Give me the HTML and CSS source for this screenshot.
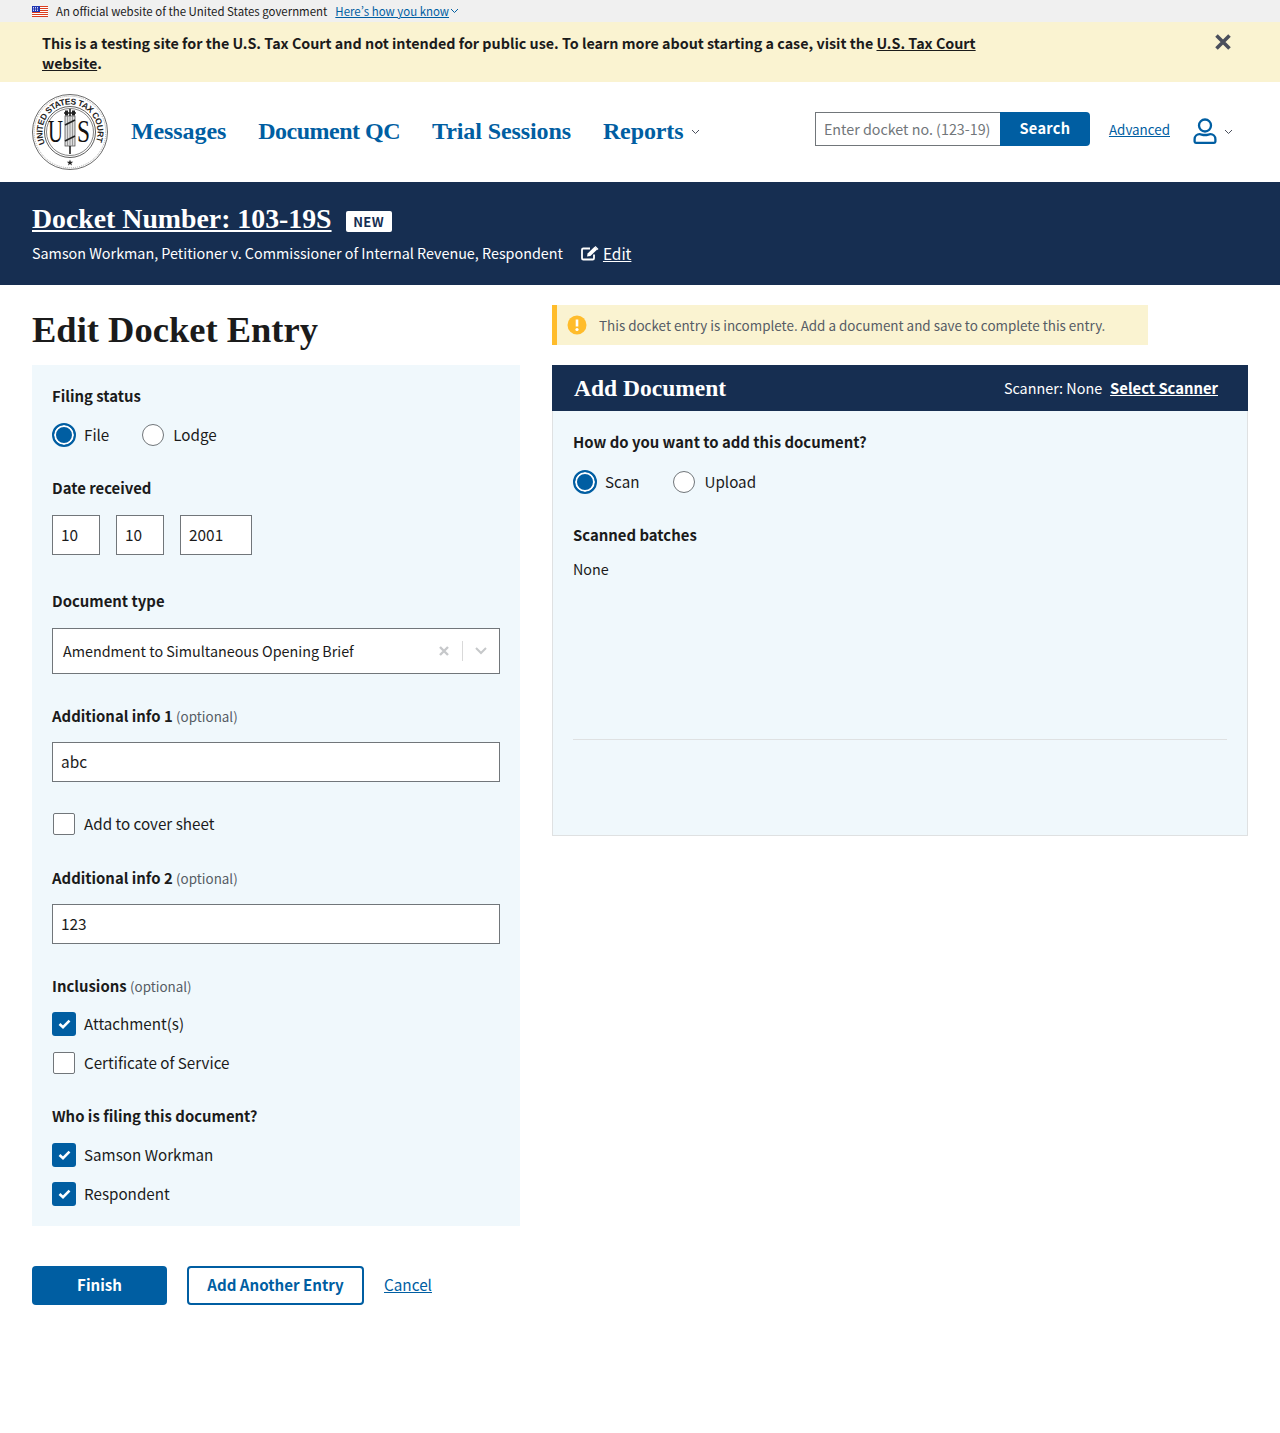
FILE: index.html
```html
<!DOCTYPE html>
<html lang="en">
<head>
<meta charset="utf-8">
<title>Edit Docket Entry</title>
<link rel="stylesheet" href="styles.css">
</head>
<body>
<div class="gov-banner">
  <svg class="flag" width="16" height="11" viewBox="0 0 16 11">
    <rect width="16" height="11" fill="#fff"/>
    <path d="M0 .5h16M0 2.5h16M0 4.5h16M0 6.5h16M0 8.5h16M0 10.5h16" stroke="#db3e1f" stroke-width="1"/>
    <rect width="8" height="6" fill="#1e33b1"/>
    <path d="M1 1.5h6M1 3h6M1 4.5h6" stroke="#fff" stroke-width=".8" stroke-dasharray="1 1"/>
  </svg>
  <span class="gov-text">An official website of the United States government</span>
  <a class="gov-link" href="#">Here’s how you know</a>
  <svg class="gov-chev" width="9" height="6" viewBox="0 0 9 6"><path d="M1 1l3.5 3.500L8 1" fill="none" stroke="#005ea2" stroke-width="1"/></svg>
</div>

<div class="test-banner">
  <p class="test-text">This is a testing site for the U.S. Tax Court and not intended for public use. To learn more about starting a case, visit the <a href="#">U.S. Tax Court website</a>.</p>
  <svg class="test-close" width="16" height="16" viewBox="0 0 16 16"><path d="M1.500 1.500l13 13M14.500 1.500l-13 13" stroke="#4a4f5c" stroke-width="3.6"/></svg>
</div>

<header class="site-header">
  <svg class="seal" width="76" height="76" viewBox="0 0 76 76">
    <defs><path id="sealArc" d="M13.100 49.600A27.500 27.500 0 1 1 62.900 49.600"/></defs>
    <circle cx="38" cy="38" r="37.500" fill="#fff" stroke="#444" stroke-width=".8"/>
    <circle cx="38" cy="38" r="35.800" fill="none" stroke="#999" stroke-width=".8" stroke-dasharray="1 1"/>
    <circle cx="38" cy="38" r="25.500" fill="none" stroke="#333" stroke-width=".8"/>
    <circle cx="38" cy="38" r="23.500" fill="none" stroke="#333" stroke-width=".6"/>
    <text class="seal-ring" fill="#222"><textPath href="#sealArc" textLength="108">UNITED STATES TAX COURT</textPath></text>
    <rect x="33" y="22" width="10" height="30" fill="#ddd" stroke="#444" stroke-width=".7"/>
    <path d="M35.500 22v30M38 22v30M40.500 22v30" stroke="#888" stroke-width=".8"/>
    <path d="M32 19h12M38 15v7M33 31l10-5M33 47l10-5M38 52v8" stroke="#222" stroke-width="1.600" fill="none"/>
    <path d="M33 16.500h3v5h-3zM40 16.500h3v5h-3z" fill="#222"/>
    <text class="seal-letter" x="16" y="48" fill="#111" textLength="15" lengthAdjust="spacingAndGlyphs">U</text>
    <text class="seal-letter" x="45" y="48" fill="#111" textLength="13" lengthAdjust="spacingAndGlyphs">S</text>
    <path d="M38 65.500l.8 2.300h2.400l-1.900 1.400.7 2.300-2-1.400-2 1.400.7-2.300-1.900-1.400h2.400z" fill="#222"/>
  </svg>
  <nav class="main-nav">
    <a href="#">Messages</a>
    <a href="#" class="nav-tight">Document QC</a>
    <a href="#">Trial Sessions</a>
    <a href="#" class="nav-reports">Reports</a>
    <svg class="nav-chev" width="9" height="6" viewBox="0 0 9 6"><path d="M1 1l3.500 3.500L8 1" fill="none" stroke="#4a4f5c" stroke-width="1"/></svg>
  </nav>
  <form class="search">
    <input class="search-input" type="text" placeholder="Enter docket no. (123-19)">
    <button class="search-btn" type="button">Search</button>
  </form>
  <a class="advanced" href="#">Advanced</a>
  <svg class="user-icon" width="24" height="26" viewBox="0 0 24 26">
    <circle cx="12" cy="7.500" r="6" fill="none" stroke="#005ea2" stroke-width="2.300"/>
    <path d="M1.600 23.500v-2.300c0-3 2.400-5 5-5 1.500 0 2.800.8 5.400.8s3.900-.8 5.400-.8c2.600 0 5 2 5 5v2.300c0 .8-.6 1.300-1.300 1.300H2.900c-.7 0-1.300-.5-1.300-1.300z" fill="none" stroke="#005ea2" stroke-width="2.300"/>
  </svg>
  <svg class="user-chev" width="9" height="6" viewBox="0 0 9 6"><path d="M1 1l3.500 3.500L8 1" fill="none" stroke="#4a4f5c" stroke-width="1"/></svg>
</header>

<section class="docket-bar">
  <div class="docket-top">
    <a class="docket-number" href="#">Docket Number: 103-19S</a>
    <span class="badge">NEW</span>
  </div>
  <div class="docket-sub">
    <span>Samson Workman, Petitioner v. Commissioner of Internal Revenue, Respondent</span>
    <svg class="edit-icon" width="18" height="15" viewBox="0 0 18 15">
      <path d="M13 8.500v3.700c0 .8-.6 1.300-1.300 1.300H2.300c-.7 0-1.300-.5-1.300-1.300V3.800c0-.7.6-1.300 1.300-1.300H9" fill="none" stroke="#fff" stroke-width="1.800"/>
      <path d="M6 10.500l.6-3L13.500.8l2.700 2.700-6.800 6.500z" fill="#fff"/>
      <path d="M14.500 0l3 2.900-1 1-2.900-3z" fill="#fff"/>
    </svg>
    <a class="docket-edit" href="#">Edit</a>
  </div>
</section>

<main class="content">
  <div class="left-col">
    <h1 class="page-title">Edit Docket Entry</h1>
    <div class="card">
      <div class="label">Filing status</div>
      <div class="choice-row first-row">
        <span class="radio checked"></span><span class="choice">File</span>
        <span class="radio second"></span><span class="choice">Lodge</span>
      </div>
      <div class="label after-choice">Date received</div>
      <div class="date-row">
        <input class="input date-short" type="text" value="10">
        <input class="input date-short" type="text" value="10">
        <input class="input date-year" type="text" value="2001">
      </div>
      <div class="label after-date">Document type</div>
      <div class="select">
        <span class="select-value">Amendment to Simultaneous Opening Brief</span>
        <svg class="select-x" width="10" height="10" viewBox="0 0 10 10"><path d="M1 1l8 8M9 1L1 9" stroke="#c6c8ca" stroke-width="2.400"/></svg>
        <span class="select-sep"></span>
        <svg class="select-chev" width="12" height="8" viewBox="0 0 12 8"><path d="M1 1l5 5 5-5" fill="none" stroke="#c6c8ca" stroke-width="2"/></svg>
      </div>
      <div class="label after-field">Additional info 1 <span class="optional">(optional)</span></div>
      <input class="input wide" type="text" value="abc">
      <label class="check-row cover"><span class="checkbox"></span><span class="choice">Add to cover sheet</span></label>
      <div class="label after-field">Additional info 2 <span class="optional">(optional)</span></div>
      <input class="input wide" type="text" value="123">
      <div class="label after-field">Inclusions <span class="optional">(optional)</span></div>
      <label class="check-row"><span class="checkbox on"><svg width="13" height="10" viewBox="0 0 13 10"><path d="M1.500 5l3.500 3.200 6.500-6.500" fill="none" stroke="#fff" stroke-width="2.600"/></svg></span><span class="choice">Attachment(s)</span></label>
      <label class="check-row next"><span class="checkbox"></span><span class="choice">Certificate of Service</span></label>
      <div class="label after-choice">Who is filing this document?</div>
      <label class="check-row next"><span class="checkbox on"><svg width="13" height="10" viewBox="0 0 13 10"><path d="M1.500 5l3.500 3.200 6.500-6.500" fill="none" stroke="#fff" stroke-width="2.600"/></svg></span><span class="choice">Samson Workman</span></label>
      <label class="check-row next"><span class="checkbox on"><svg width="13" height="10" viewBox="0 0 13 10"><path d="M1.500 5l3.500 3.200 6.500-6.500" fill="none" stroke="#fff" stroke-width="2.600"/></svg></span><span class="choice">Respondent</span></label>
    </div>
    <div class="actions">
      <button class="btn btn-primary" type="button">Finish</button>
      <button class="btn btn-outline" type="button">Add Another Entry</button>
      <a class="cancel" href="#">Cancel</a>
    </div>
  </div>

  <div class="right-col">
    <div class="alert">
      <svg class="alert-icon" width="20" height="20" viewBox="0 0 20 20">
        <circle cx="10" cy="10" r="9.500" fill="#ffbc2b"/>
        <path d="M10 4.500v7" stroke="#fff" stroke-width="2.600"/>
        <circle cx="10" cy="14.500" r="1.600" fill="#fff"/>
      </svg>
      <span>This docket entry is incomplete. Add a document and save to complete this entry.</span>
    </div>
    <div class="doc-head">
      <h2 class="doc-title">Add Document</h2>
      <span class="scanner">Scanner: None</span>
      <a class="select-scanner" href="#">Select Scanner</a>
    </div>
    <div class="doc-body">
      <div class="label">How do you want to add this document?</div>
      <div class="choice-row">
        <span class="radio checked"></span><span class="choice">Scan</span>
        <span class="radio second"></span><span class="choice">Upload</span>
      </div>
      <div class="label after-choice">Scanned batches</div>
      <p class="none-text">None</p>
      <hr class="rule">
    </div>
  </div>
</main>
</body>
</html>
```
FILE: styles.css
```css
* { box-sizing: border-box; }
html, body { margin: 0; padding: 0; }
body {
  font-family: "Noto Sans CJK SC", "Noto Sans", sans-serif;
  font-size: 14.35px;
  line-height: 24px;
  color: #1b1b1b;
  background: #fff;
  height: 1433px;
  overflow: hidden;
}
a { color: #005ea2; }

.gov-banner {
  height: 22px;
  background: #f0f0f0;
  padding-left: 32px;
  display: flex;
  align-items: center;
  font-size: 11.45px;
  line-height: 16px;
}
.flag { margin-right: 8px; }
.gov-text { margin-right: 8px; }
.gov-link { font-feature-settings: "pwid"; }
.gov-chev { margin-left: 1px; }

.test-banner {
  height: 60px;
  background: #faf3d1;
  padding: 11px 49px 0 42px;
  display: flex;
  justify-content: space-between;
  align-items: flex-start;
}
.test-text {
  margin: 0;
  width: 940px;
  font-size: 14.32px;
  font-weight: 700;
  line-height: 20px;
}
.test-text a { color: #1b1b1b; }
.test-close { margin-top: 1px; }

.site-header {
  height: 100px;
  padding: 0 47px 0 32px;
  display: flex;
  align-items: center;
}
.seal { flex: none; }
.seal-ring { font: 700 8.5px "Liberation Sans", sans-serif; }
.seal-letter { font: 400 31px "Liberation Serif", serif; }
.main-nav {
  display: flex;
  align-items: center;
  gap: 32px;
  margin-left: 23px;
  flex: 1;
}
.main-nav a {
  font-family: "Liberation Serif", serif;
  font-weight: 700;
  font-size: 24px;
  line-height: 30px;
  text-decoration: none;
  letter-spacing: -.1px;
  padding-bottom: 2px;
}
.main-nav a.nav-tight { letter-spacing: -.5px; }
.nav-chev { margin-left: -25px; }
.search { display: flex; height: 34px; margin-top: -6px; }
.search-input {
  width: 185px;
  height: 34px;
  border: 1px solid #71767a;
  border-right: 0;
  padding: 0 8px 2px;
  font: 14.3px "Noto Sans CJK SC", sans-serif;
  color: #1b1b1b;
  background: #fff;
  border-radius: 0;
}
.search-input::placeholder { color: #71767a; opacity: 1; }
.search-btn {
  width: 90px;
  height: 34px;
  border: 0;
  padding: 0 0 3px;
  border-radius: 0 4px 4px 0;
  background: #005ea2;
  color: #fff;
  font: 700 14.6px "Noto Sans CJK SC", sans-serif;
  letter-spacing: .3px;
}
.advanced { margin-left: 19px; margin-top: -6px; font-size: 13.4px; }
.user-icon { margin-left: 23px; margin-top: -3px; }
.user-chev { margin-left: 7px; }

.docket-bar {
  height: 103px;
  background: #162e51;
  color: #fff;
  padding: 19px 32px 0;
}
.docket-bar a { color: #fff; }
.docket-top { display: flex; align-items: center; height: 36px; }
.docket-number {
  font-family: "Liberation Serif", serif;
  font-weight: 700;
  font-size: 27.8px;
  line-height: 36px;
}
.badge {
  margin-left: 14px;
  margin-top: 4px;
  width: 46px;
  height: 21px;
  background: #fff;
  color: #162e51;
  border-radius: 2px;
  font-weight: 700;
  font-size: 13px;
  line-height: 21px;
  text-align: center;
  letter-spacing: .3px;
}
.docket-sub { display: flex; align-items: center; height: 24px; margin-top: 4px; }
.edit-icon { margin-left: 18px; margin-right: 4px; }
.docket-edit { font-size: 15.4px; }

.content {
  display: grid;
  grid-template-columns: 488px 696px;
  gap: 32px;
  padding: 0 32px;
}
.page-title {
  margin: 25px 0 15px;
  font-family: "Liberation Serif", serif;
  font-weight: 700;
  font-size: 36.5px;
  line-height: 40px;
  color: #1b1b1b;
}
.card {
  background: #f0f8fc;
  padding: 19px 20px 20px;
  height: 861px;
}
.label { font-weight: 600; font-size: 14.9px; height: 24px; }
.optional { font-weight: 400; font-size: 13.4px; color: #565c65; }
.choice-row { display: flex; align-items: center; margin-top: 14px; height: 24px; }
.choice-row.first-row { margin-top: 15px; }
.choice { margin-left: 8px; font-size: 15.2px; padding-bottom: 2px; }
.radio {
  flex: none;
  width: 22px;
  height: 22px;
  margin: 0 1px;
  border-radius: 50%;
  background: #fff;
  border: 1px solid #71767a;
}
.radio.second { margin-left: 33px; }
.radio.checked {
  width: 24px;
  height: 24px;
  margin: 0;
  background: #005ea2;
  border: 2px solid #005ea2;
  box-shadow: inset 0 0 0 2px #fff;
}
.after-choice { margin-top: 29px; }
.after-date { margin-top: 34px; }
.after-field { margin-top: 30px; }
.date-row { display: flex; gap: 16px; margin-top: 15px; }
.input {
  height: 40px;
  border: 1px solid #71767a;
  background: #fff;
  padding: 0 8px 2px;
  font: 15.4px "Noto Sans CJK SC", sans-serif;
  color: #1b1b1b;
  border-radius: 0;
  display: block;
}
.date-short { width: 48px; }
.date-year { width: 72px; }
.wide { width: 448px; margin-top: 14px; }
.select {
  display: flex;
  align-items: center;
  height: 46px;
  margin-top: 15px;
  background: #fff;
  border: 1px solid #71767a;
  padding: 0 12px 0 10px;
}
.select-value { flex: 1; }
.select-sep { width: 1px; height: 20px; background: #d9d9d9; margin: 0 12px 0 13px; }
.check-row { display: flex; align-items: center; height: 24px; margin-top: 14px; }
.check-row.cover { margin-top: 30px; }
.check-row.next { margin-top: 15px; }
.checkbox {
  flex: none;
  width: 22px;
  height: 22px;
  margin: 0 1px;
  background: #fff;
  border: 1px solid #71767a;
  border-radius: 2px;
}
.checkbox.on {
  width: 24px;
  height: 24px;
  margin: 0;
  background: #005ea2;
  border: 0;
  border-radius: 3px;
  display: flex;
  align-items: center;
  justify-content: center;
}
.actions { display: flex; align-items: center; margin-top: 40px; }
.btn {
  height: 39px;
  padding: 0 0 3px;
  border-radius: 4px;
  font: 700 15.1px "Noto Sans CJK SC", sans-serif;
}
.btn-primary { width: 135px; background: #005ea2; border: 0; color: #fff; }
.btn-outline { width: 177px; margin-left: 20px; background: #fff; border: 2px solid #005ea2; color: #005ea2; }
.cancel { margin-left: 20px; margin-top: -3px; font-size: 15.3px; }

.right-col { padding-top: 20px; }
.alert {
  width: 596px;
  height: 40px;
  display: flex;
  align-items: center;
  background: #faf3d1;
  border-left: 5px solid #ffbc2b;
  padding-left: 10px;
  color: #565c65;
  font-size: 13.43px;
}
.alert-icon { margin-right: 12px; }
.doc-head {
  height: 46px;
  margin-top: 20px;
  background: #162e51;
  color: #fff;
  display: flex;
  align-items: center;
  padding: 0 30px 0 22px;
}
.doc-title {
  flex: 1;
  margin: 0;
  font-family: "Liberation Serif", serif;
  font-weight: 700;
  font-size: 23.5px;
  line-height: 30px;
}
.select-scanner { color: #fff; font-weight: 700; font-size: 14.8px; margin-left: 8px; }
.doc-body {
  height: 425px;
  background: #f0f8fc;
  border: 1px solid #dfe1e2;
  border-top: 0;
  padding: 19px 20px 0;
}
.doc-body .choice-row { margin-top: 16px; }
.doc-body .radio.second { margin-left: 34px; }
.none-text { margin: 10px 0 0; }
.rule { margin: 158px 0 0; border: 0; border-top: 1px solid #dfe1e2; }
```
